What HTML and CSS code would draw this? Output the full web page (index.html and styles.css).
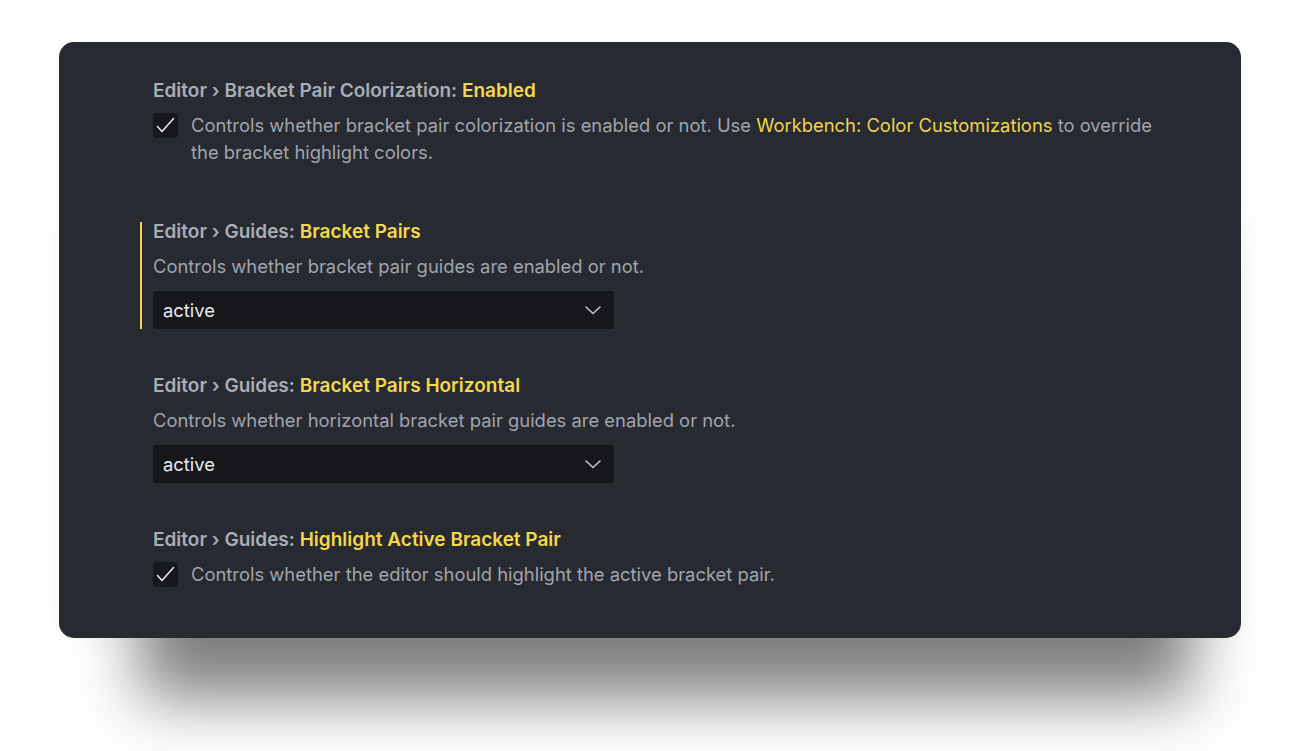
FILE: index.html
```html
<!DOCTYPE html>
<html>
<head>
<meta charset="utf-8">
<link rel="stylesheet" href="styles.css">
</head>
<body>
<div class="stage">
  <div class="panel">
    <div class="setting setting-first">
      <div class="title"><span class="cat">Editor › Bracket Pair Colorization: </span><span class="name">Enabled</span></div>
      <div class="check-row">
        <span class="checkbox"><svg width="25" height="25" viewBox="0 0 25 25"><path d="M4.5 13.5 L9 18.5 L20.5 5.5" fill="none" stroke="#e4e5e8" stroke-width="1.6" stroke-linecap="round" stroke-linejoin="round"/></svg></span>
        <div class="desc desc-check">Controls whether bracket pair colorization is enabled or not. Use <span class="link">Workbench: Color Customizations</span> to override the bracket highlight colors.</div>
      </div>
    </div>
    <div class="setting focused">
      <div class="title"><span class="cat">Editor › Guides: </span><span class="name">Bracket Pairs</span></div>
      <div class="desc">Controls whether bracket pair guides are enabled or not.</div>
      <div class="select"><span>active</span><svg width="16" height="9" viewBox="0 0 16 9"><path d="M1 1 L8 7.5 L15 1" fill="none" stroke="#c3c5cb" stroke-width="1.6" stroke-linecap="round" stroke-linejoin="round"/></svg></div>
    </div>
    <div class="setting">
      <div class="title"><span class="cat">Editor › Guides: </span><span class="name">Bracket Pairs Horizontal</span></div>
      <div class="desc">Controls whether horizontal bracket pair guides are enabled or not.</div>
      <div class="select"><span>active</span><svg width="16" height="9" viewBox="0 0 16 9"><path d="M1 1 L8 7.5 L15 1" fill="none" stroke="#c3c5cb" stroke-width="1.6" stroke-linecap="round" stroke-linejoin="round"/></svg></div>
    </div>
    <div class="setting">
      <div class="title"><span class="cat">Editor › Guides: </span><span class="name">Highlight Active Bracket Pair</span></div>
      <div class="check-row">
        <span class="checkbox"><svg width="25" height="25" viewBox="0 0 25 25"><path d="M4.5 13.5 L9 18.5 L20.5 5.5" fill="none" stroke="#e4e5e8" stroke-width="1.6" stroke-linecap="round" stroke-linejoin="round"/></svg></span>
        <div class="desc desc-check">Controls whether the editor should highlight the active bracket pair.</div>
      </div>
    </div>
  </div>
</div>
</body>
</html>
```
FILE: styles.css
```css
html, body {
  margin: 0;
  padding: 0;
  background: #ffffff;
}
body {
  font-family: Inter, "Noto Sans", sans-serif;
  -webkit-font-smoothing: antialiased;
}
.stage {
  height: 751px;
  box-sizing: border-box;
  padding: 42px 60px 0 59px;
  overflow: hidden;
}
.panel {
  width: 1182px;
  height: 596px;
  box-sizing: border-box;
  background: #272a31;
  border-radius: 15px;
  padding: 39px 60px 0 81px;
  display: flex;
  flex-direction: column;
  gap: 47px;
  box-shadow: 16px 125px 60px -65px rgba(0,0,0,0.5), 0 0 30px rgba(0,0,0,0.03);
}
.setting {
  border-left: 2px solid transparent;
  padding-left: 11px;
  display: flex;
  flex-direction: column;
}
.setting-first {
  margin-bottom: 9px;
}
.setting.focused {
  border-left-color: #f1d54a;
}
.title {
  font-size: 19px;
  line-height: 18px;
  padding-top: 1px;
  font-weight: 600;
  color: #a9adb6;
  white-space: nowrap;
}
.title .name {
  color: #f4d84c;
}
.desc {
  font-size: 18.4px;
  line-height: 24px;
  color: #a0a4ad;
  margin-top: 13px;
}
.check-row {
  display: flex;
  gap: 13px;
  margin-top: 13px;
  align-items: flex-start;
}
.checkbox {
  flex: none;
  width: 25px;
  height: 25px;
  border-radius: 4px;
  background: #17181c;
  display: flex;
}
.desc-check {
  margin-top: -1px;
  line-height: 27px;
}
.link {
  color: #f1d54a;
}
.select {
  margin-top: 13px;
  width: 461px;
  height: 38px;
  box-sizing: border-box;
  background: #16171b;
  border-radius: 3px;
  display: flex;
  align-items: center;
  justify-content: space-between;
  padding: 0 13px 0 10px;
  font-size: 18.4px;
  color: #e8e9ec;
}
.select svg {
  display: block;
}
```
